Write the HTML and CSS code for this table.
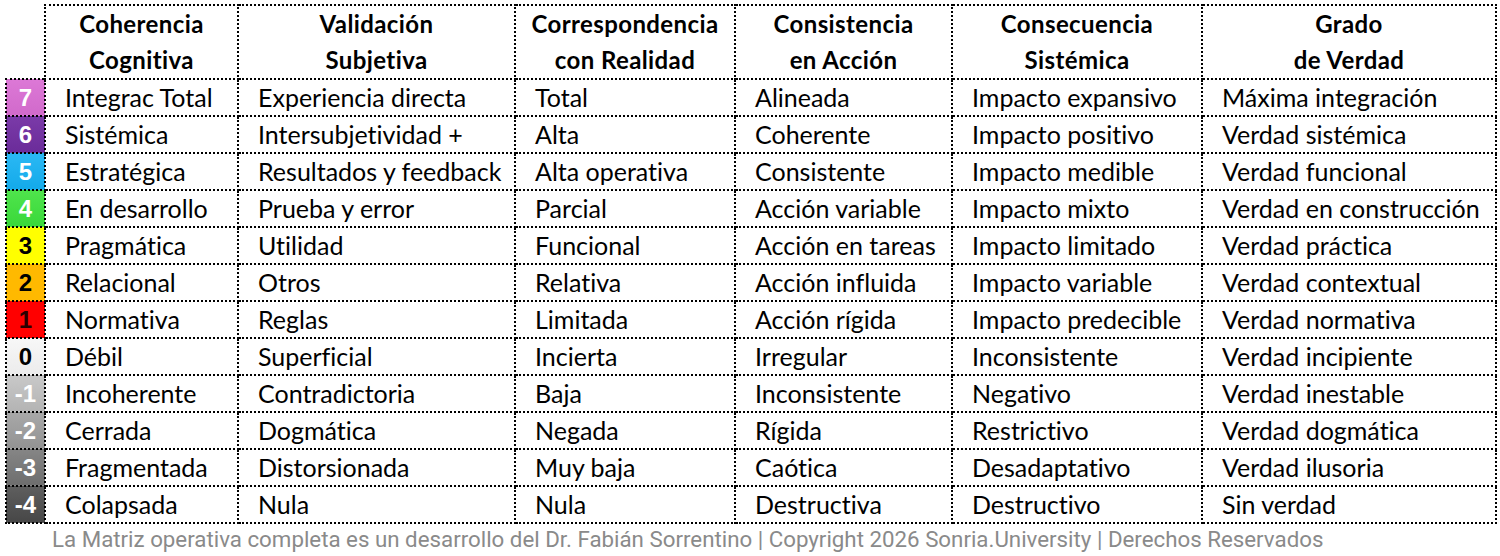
FILE: index.html
```html
<!DOCTYPE html>
<html lang="es">
<head>
<meta charset="utf-8">
<title>Matriz operativa</title>
<link rel="stylesheet" href="styles.css">
</head>
<body>
<table class="matrix">
  <colgroup>
    <col class="c-lvl"><col class="c1"><col class="c2"><col class="c3"><col class="c4"><col class="c5"><col class="c6">
  </colgroup>
  <thead>
    <tr>
      <th class="corner"></th>
      <th>Coherencia<br>Cognitiva</th>
      <th>Validación<br>Subjetiva</th>
      <th>Correspondencia<br>con Realidad</th>
      <th>Consistencia<br>en Acción</th>
      <th>Consecuencia<br>Sistémica</th>
      <th>Grado<br>de Verdad</th>
    </tr>
  </thead>
  <tbody>
    <tr><td class="lvl l7">7</td><td>Integrac Total</td><td>Experiencia directa</td><td>Total</td><td>Alineada</td><td>Impacto expansivo</td><td>Máxima integración</td></tr>
    <tr><td class="lvl l6">6</td><td>Sistémica</td><td>Intersubjetividad +</td><td>Alta</td><td>Coherente</td><td>Impacto positivo</td><td>Verdad sistémica</td></tr>
    <tr><td class="lvl l5">5</td><td>Estratégica</td><td>Resultados y feedback</td><td>Alta operativa</td><td>Consistente</td><td>Impacto medible</td><td>Verdad funcional</td></tr>
    <tr><td class="lvl l4">4</td><td>En desarrollo</td><td>Prueba y error</td><td>Parcial</td><td>Acción variable</td><td>Impacto mixto</td><td>Verdad en construcción</td></tr>
    <tr><td class="lvl l3">3</td><td>Pragmática</td><td>Utilidad</td><td>Funcional</td><td>Acción en tareas</td><td>Impacto limitado</td><td>Verdad práctica</td></tr>
    <tr><td class="lvl l2">2</td><td>Relacional</td><td>Otros</td><td>Relativa</td><td>Acción influida</td><td>Impacto variable</td><td>Verdad contextual</td></tr>
    <tr><td class="lvl l1">1</td><td>Normativa</td><td>Reglas</td><td>Limitada</td><td>Acción rígida</td><td>Impacto predecible</td><td>Verdad normativa</td></tr>
    <tr><td class="lvl l0">0</td><td>Débil</td><td>Superficial</td><td>Incierta</td><td>Irregular</td><td>Inconsistente</td><td>Verdad incipiente</td></tr>
    <tr><td class="lvl lm1">-1</td><td>Incoherente</td><td>Contradictoria</td><td>Baja</td><td>Inconsistente</td><td>Negativo</td><td>Verdad inestable</td></tr>
    <tr><td class="lvl lm2">-2</td><td>Cerrada</td><td>Dogmática</td><td>Negada</td><td>Rígida</td><td>Restrictivo</td><td>Verdad dogmática</td></tr>
    <tr><td class="lvl lm3">-3</td><td>Fragmentada</td><td>Distorsionada</td><td>Muy baja</td><td>Caótica</td><td>Desadaptativo</td><td>Verdad ilusoria</td></tr>
    <tr><td class="lvl lm4">-4</td><td>Colapsada</td><td>Nula</td><td>Nula</td><td>Destructiva</td><td>Destructivo</td><td>Sin verdad</td></tr>
  </tbody>
</table>
<p class="footer">La Matriz operativa completa es un desarrollo del Dr. Fabián Sorrentino | Copyright 2026 Sonria.University | Derechos Reservados</p>
</body>
</html>
```

FILE: styles.css
```css
html, body {
  margin: 0;
  padding: 0;
  background: #ffffff;
}
body {
  padding: 4px 0 0 5px;
  font-family: Lato, "Noto Sans", sans-serif;
  font-variant-ligatures: none;
  color: #000;
}
.matrix {
  border-collapse: collapse;
  table-layout: fixed;
  width: 1490px;
}
.c-lvl { width: 39px; }
.c1 { width: 193px; }
.c2 { width: 277px; }
.c3 { width: 220px; }
.c4 { width: 217px; }
.c5 { width: 250px; }
.c6 { width: 294px; }

.matrix th,
.matrix td {
  border: 2px dotted #000;
  padding: 0;
}
.matrix th {
  height: 70px;
  font-weight: 700;
  font-size: 24px;
  line-height: 36px;
  text-align: center;
  letter-spacing: 0.4px;
}
.matrix th.corner {
  border: none;
}
.matrix td {
  height: 35px;
  font-size: 25px;
  line-height: 35px;
  padding-left: 19px;
  white-space: nowrap;
}
.matrix td.lvl {
  padding: 0;
  text-align: center;
  font-family: "Liberation Sans", Arial, sans-serif;
  font-weight: 700;
  font-size: 24px;
  color: #fff;
}
.l7 { background: linear-gradient(#dc78d6, #d16acb); }
.l6 { background: linear-gradient(#7a3aa8, #6b2c9a); }
.l5 { background: linear-gradient(#2ab8f4, #14aaea); }
.l4 { background: linear-gradient(#4fe44c, #3ad83a); }
.l3 { background: #ffff00; color: #000 !important; }
.l2 { background: #ffb900; color: #000 !important; }
.l1 { background: #ff0000; color: #2a0000 !important; }
.l0 { background: linear-gradient(#f7f7f7, #ececec); color: #000 !important; }
.lm1 { background: linear-gradient(#c8c8c8, #b4b4b4); }
.lm2 { background: linear-gradient(#a8a8a8, #939393); }
.lm3 { background: linear-gradient(#858585, #6e6e6e); }
.lm4 { background: linear-gradient(#5e5e5e, #474747); }

.footer {
  margin: 0;
  padding-left: 47px;
  font-family: Roboto, "Liberation Sans", sans-serif;
  font-size: 22.3px;
  line-height: 30px;
  color: #8a8a8a;
  white-space: nowrap;
}
```
